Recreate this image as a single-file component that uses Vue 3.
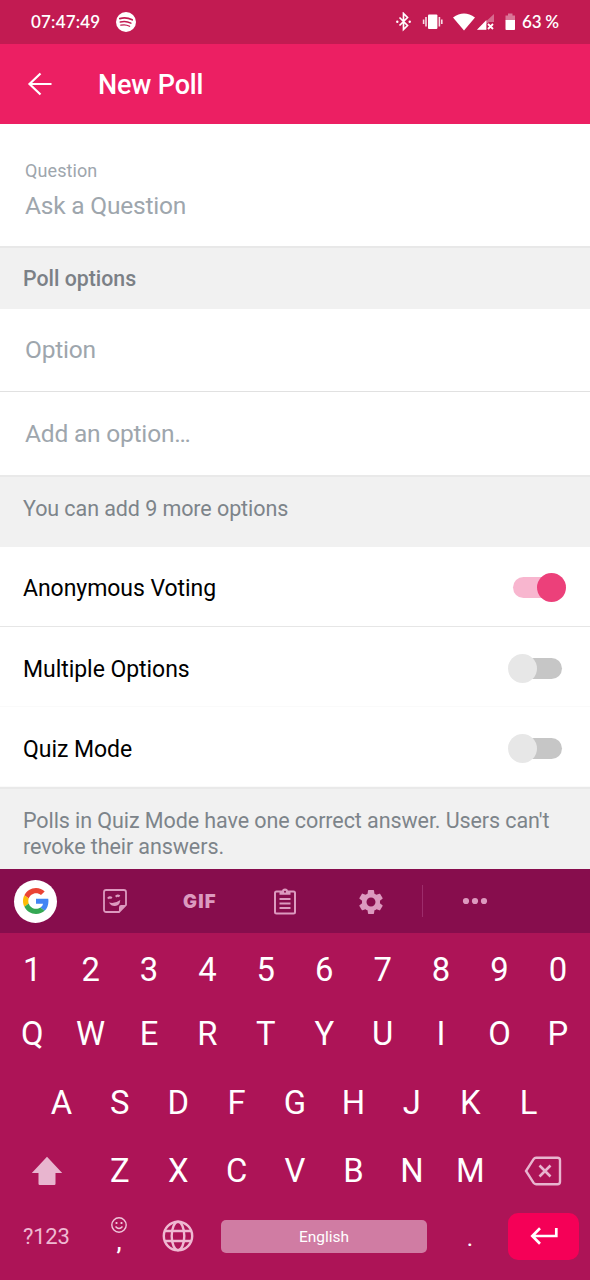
<script setup>
const digits = [...'1234567890']
const rowOne = [...'QWERTYUIOP']
const rowTwo = [...'ASDFGHJKL']
const rowThree = [...'ZXCVBNM']
const settings = [
  { label: 'Anonymous Voting', on: true },
  { label: 'Multiple Options', on: false },
  { label: 'Quiz Mode', on: false },
]
</script>

<template>
  <div class="screen">
    <div class="status">
      <span class="clock">07:47:49</span>
      <svg class="spotify" width="20" height="20" viewBox="0 0 20 20">
        <circle cx="10" cy="10" r="10" fill="#fff" />
        <g fill="none" stroke="#c21b52" stroke-linecap="round">
          <path d="M3.8 6.6q6.400-1.700 12.400 1.200" stroke-width="1.700" />
          <path d="M4.300 10q5.500-1.500 10.600 1.100" stroke-width="1.500" />
          <path d="M4.800 13.200q4.700-1.200 8.800 1" stroke-width="1.300" />
        </g>
      </svg>
      <span class="grow"></span>
      <svg class="tray" width="124" height="20" viewBox="0 0 124 20">
        <g fill="none" stroke="#fff" stroke-width="1.700">
          <path d="M3.500 5.500l8 8-4 4V1.500l4 4-8 8" />
        </g>
        <circle cx="1.300" cy="9.700" r="1.200" fill="#fff" />
        <circle cx="13.700" cy="9.700" r="1.200" fill="#fff" />
        <rect x="32" y="2.500" width="9.400" height="14.500" rx="1" fill="#fff" />
        <path d="M30 5v9.500M43.400 5v9.500M27.600 7.500v4.500M45.800 7.500v4.500" stroke="#fff" stroke-width="1.600" opacity=".85" />
        <path d="M57 5.600Q68-2.500 79 5.600L68 18.500z" fill="#fff" />
        <path d="M98 2v8h-4.800l-3.200 2v5.700h-9z" fill="#fff" opacity=".35" />
        <path d="M81 17.700l9.400-9.700v9.700z" fill="#fff" />
        <path d="M92 12l5 5M97 12l-5 5" stroke="#fff" stroke-width="1.800" />
        <path d="M112 1.500h4.500v2h2.500v4.800h-9.500V3.500h2.500z" fill="#fff" opacity=".4" />
        <path d="M109.500 8h9.500v9.200q0 .8-.8.800h-7.900q-.8 0-.8-.8z" fill="#fff" />
      </svg>
      <span class="battery">63 %</span>
    </div>

    <header class="appbar">
      <svg width="26" height="24" viewBox="0 0 26 24" fill="none" stroke="#fff" stroke-width="2.200">
        <path d="M24.500 12H2.500M13.500 1.500L2.500 12l11 10.500" />
      </svg>
      <h1>New Poll</h1>
    </header>

    <section class="question">
      <label>Question</label>
      <div class="placeholder">Ask a Question</div>
    </section>
    <div class="section-title">Poll options</div>
    <div class="field first">Option</div>
    <div class="field">Add an option…</div>
    <div class="note remaining">You can add 9 more options</div>

    <div v-for="s in settings" :key="s.label" class="setting" :class="{ active: s.on }">
      <span>{{ s.label }}</span>
      <i class="toggle" :class="{ on: s.on }"></i>
    </div>
    <div class="note hint">Polls in Quiz Mode have one correct answer. Users can't<br />revoke their answers.</div>

    <div class="keyboard">
      <div class="tools">
        <span class="google">
          <svg width="26" height="26" viewBox="0 0 48 48">
            <path fill="#EA4335" d="M24 9.500c3.540 0 6.710 1.220 9.210 3.600l6.850-6.850C35.900 2.380 30.470 0 24 0 14.620 0 6.510 5.380 2.560 13.220l7.980 6.190C12.430 13.720 17.740 9.500 24 9.500z" />
            <path fill="#4285F4" d="M46.980 24.550c0-1.570-.15-3.090-.38-4.550H24v9.020h12.940c-.58 2.960-2.260 5.480-4.780 7.180l7.730 6c4.510-4.180 7.090-10.360 7.090-17.650z" />
            <path fill="#FBBC05" d="M10.530 28.590c-.48-1.450-.76-2.990-.76-4.590s.27-3.140.76-4.590l-7.980-6.190C.92 16.460 0 20.120 0 24c0 3.880.92 7.540 2.560 10.780l7.970-6.190z" />
            <path fill="#34A853" d="M24 48c6.480 0 11.930-2.130 15.890-5.810l-7.730-6c-2.150 1.450-4.920 2.300-8.160 2.300-6.260 0-11.570-4.220-13.470-9.910l-7.980 6.190C6.510 42.620 14.620 48 24 48z" />
          </svg>
        </span>
        <span class="tool">
          <svg width="24" height="24" viewBox="0 0 24 24" fill="none" stroke="currentColor" stroke-width="1.800">
            <path d="M3.200 1h17.600Q23 1 23 3.200V16l-7 7H3.200Q1 23 1 20.800V3.200Q1 1 3.200 1z" />
            <path d="M16 23v-4.800q0-2.200 2.200-2.200H23z" fill="currentColor" stroke="none" />
            <path d="M5 9.700q1.600-2.400 3.800-.6M12.800 7.800q1.800-2.200 3.800-.4" stroke-width="2.200" />
            <path d="M6 13.500q6 1.500 11.300-2.500-.5 5.800-5.300 6-4 .2-6-3.500z" fill="currentColor" stroke="none" />
          </svg>
        </span>
        <span class="tool gif">GIF</span>
        <span class="tool">
          <svg width="22" height="27" viewBox="0 0 22 27" fill="none" stroke="currentColor" stroke-width="2">
            <rect x="1" y="3.500" width="20" height="22" rx="1.500" />
            <path d="M5.500 11h11M5.500 15.500h11M5.500 20h11" stroke-width="1.800" />
            <path d="M5.500 3.500H8a3 3 0 0 1 6 0h2.500v3.300h-11z" fill="currentColor" stroke="none" />
            <circle cx="11" cy="3.700" r="1" fill="#870d4d" stroke="none" />
          </svg>
        </span>
        <span class="tool gear">
          <svg width="30" height="30" viewBox="0 0 24 24" fill="currentColor">
            <path d="M19.140 12.940c.04-.3.060-.61.060-.94s-.02-.64-.07-.94l2.030-1.580c.18-.14.230-.41.120-.61l-1.920-3.320c-.12-.22-.37-.29-.59-.22l-2.390.96c-.5-.38-1.030-.7-1.620-.94L14.400 2.810c-.04-.24-.24-.41-.48-.41h-3.840c-.24 0-.43.17-.47.41L9.250 5.350C8.660 5.590 8.120 5.920 7.630 6.290L5.240 5.330c-.22-.08-.47 0-.59.22L2.740 8.870c-.12.210-.08.470.12.610l2.030 1.580C4.840 11.360 4.800 11.690 4.800 12s.02.640.07.940l-2.030 1.580c-.18.140-.23.410-.12.610l1.920 3.320c.12.220.37.290.59.220l2.390-.96c.5.380 1.030.7 1.620.94l.36 2.540c.05.240.24.410.48.410h3.840c.24 0 .44-.17.470-.41l.36-2.540c.59-.24 1.130-.56 1.620-.94l2.390.96c.22.080.47 0 .59-.22l1.920-3.320c.12-.22.070-.47-.12-.61l-2.010-1.580zM12 15.600c-1.980 0-3.600-1.620-3.600-3.600s1.620-3.600 3.600-3.600 3.600 1.620 3.600 3.600-1.620 3.600-3.600 3.600z" />
          </svg>
        </span>
        <span class="rule"></span>
        <span class="more"><svg width="26" height="8" viewBox="0 0 26 8" fill="currentColor"><circle cx="4" cy="4" r="3.100" /><circle cx="13" cy="4" r="3.100" /><circle cx="22" cy="4" r="3.100" /></svg></span>
      </div>

      <div class="keys numbers"><span v-for="k in digits" :key="k">{{ k }}</span></div>
      <div class="keys"><span v-for="k in rowOne" :key="k">{{ k }}</span></div>
      <div class="keys inset"><span v-for="k in rowTwo" :key="k">{{ k }}</span></div>
      <div class="keys last">
        <span class="wide">
          <svg width="32" height="30" viewBox="0 0 32 30"><path d="M16 .8L31.200 17H24.500v10.800q0 1.200-1.200 1.200H8.700q-1.200 0-1.200-1.200V17H.8z" fill="#e8b5cf" /></svg>
        </span>
        <span v-for="k in rowThree" :key="k">{{ k }}</span>
        <span class="wide">
          <svg width="38" height="30" viewBox="0 0 38 30" fill="none" stroke="#e8b5cf" stroke-width="2.400">
            <path d="M12 1.800h21.500q2.500 0 2.500 2.500v21.400q0 2.500-2.500 2.500H12q-1.500 0-2.400-1.300L2 15l7.600-11.900Q10.500 1.800 12 1.800z" />
            <path d="M15.500 9.500l11 11M26.500 9.500l-11 11" stroke-width="2.600" />
          </svg>
        </span>
      </div>
      <div class="bottom">
        <span class="symbols">?123</span>
        <span class="comma">
          <svg width="16" height="16" viewBox="0 0 16 16" fill="none" stroke="#efc5da" stroke-width="1.400">
            <circle cx="8" cy="8" r="7.200" />
            <path d="M4.500 9.500q3.500 4 7 0" />
            <path d="M5.500 5v2M10.500 5v2" stroke-width="1.800" />
          </svg>
          <b>,</b>
        </span>
        <span class="globe">
          <svg width="32" height="32" viewBox="0 0 32 32" fill="none" stroke="#efb9d2" stroke-width="2.400">
            <circle cx="16" cy="16" r="14.200" />
            <ellipse cx="16" cy="16" rx="6.300" ry="14.200" />
            <path d="M3 11h26M3 21h26" />
          </svg>
        </span>
        <span class="space">English</span>
        <span class="period">.</span>
        <span class="enter">
          <svg width="28" height="18" viewBox="0 0 28 18" fill="none" stroke="#fff" stroke-width="2.700">
            <path d="M26.300 1v8H2.500M10 1.200L2.300 9l7.700 7.800" />
          </svg>
        </span>
      </div>
    </div>
  </div>
</template>

<style>
body { margin: 0; }
</style>

<style scoped>
.screen {
  width: 590px;
  height: 1280px;
  overflow: hidden;
  display: flex;
  flex-direction: column;
  background: #fff;
  font-family: Roboto, "Liberation Sans", sans-serif;
}
.screen > * { box-sizing: border-box; flex-shrink: 0; }
.grow { flex: 1; }
.status {
  height: 44px;
  padding: 0 31px;
  display: flex;
  align-items: center;
  background: #c21b52;
  color: #fff;
  font: 600 17px/44px Lato, sans-serif;
}
.clock { width: 70px; letter-spacing: .2px; white-space: nowrap; }
.spotify { margin-left: 15px; }
.tray { margin-right: 2px; }
.battery { width: 37px; white-space: nowrap; letter-spacing: -.2px; }
.appbar {
  height: 80px;
  padding-left: 27px;
  display: flex;
  align-items: center;
  gap: 45px;
  background: #ec1f63;
  color: #fff;
}
h1 { margin: 2px 0 0; font-size: 27px; letter-spacing: -.15px; font-weight: 500; line-height: 32px; }
.question { height: 122px; padding: 36px 25px 0; color: #9ea6ad; }
.question label { display: block; font-size: 18px; line-height: 22px; letter-spacing: .1px; }
.placeholder { margin-top: 9px; font-size: 24.500px; line-height: 29px; letter-spacing: -.2px; }
.section-title {
  height: 63px;
  padding: 1px 23px 0;
  background: #f1f1f1;
  border-top: 2px solid #e8e8e8;
  color: #7b8086;
  font-size: 21.300px;
  font-weight: 500;
  line-height: 60px;
}
.field { height: 83px; padding: 0 25px; line-height: 83px; font-size: 24.500px; letter-spacing: -.2px; color: #9ea6ad; }
.field.first { line-height: 81px; border-bottom: 1px solid #e1e1e1; }
.note { padding: 0 23px; background: #f1f1f1; border-top: 2px solid #e9e9e9; color: #7d848a; font-size: 21.500px; letter-spacing: -.08px; }
.remaining { height: 72px; line-height: 63px; }
.hint { height: 82px; padding-top: 19px; line-height: 26px; white-space: nowrap; }
.setting {
  height: 80px;
  padding: 0 24px 0 23px;
  display: flex;
  align-items: center;
  justify-content: space-between;
  border-bottom: 1px solid #e6e6e6;
  color: #000;
  font-size: 23px;
  letter-spacing: -.05px;
}
.setting span { margin-top: 5px; }
.setting.active span { margin-top: 3px; }
.setting:nth-last-child(-n+4) { border-bottom-color: #fafafa; }
.toggle { position: relative; width: 53px; height: 29px; margin-right: 5px; margin-top: 3px; }
.toggle::before {
  content: "";
  position: absolute;
  left: 5px;
  top: 4px;
  width: 49px;
  height: 21px;
  border-radius: 11px;
  background: #c6c6c6;
}
.toggle::after {
  content: "";
  position: absolute;
  left: 0;
  top: 0;
  width: 29px;
  height: 29px;
  border-radius: 50%;
  background: #e7e7e7;
}
.toggle.on { margin-right: 0; margin-top: 2px; }
.toggle.on::before { left: 0; background: #f8b6cf; }
.toggle.on::after { left: 24px; background: #ec407a; }

.keyboard { height: 411px; background: #ad1457; color: #fff; display: flex; flex-direction: column; }
.tools { height: 64px; display: flex; align-items: center; background: #870d4d; color: #dc9abf; }
.google {
  width: 43px;
  height: 43px;
  margin: 0 15px 0 14px;
  border-radius: 50%;
  background: #fff;
  display: flex;
  align-items: center;
  justify-content: center;
}
.tool { width: 85.300px; display: flex; justify-content: center; }
.gif { font: 900 18.500px/24px Inter, sans-serif; letter-spacing: 1.300px; }
.gear { padding-top: 2px; }
.rule { width: 1px; height: 32px; margin-left: 9px; background: #9d2c6b; }
.more { margin-left: 39px; display: flex; }
.keys { height: 68px; padding: 0 3px; display: flex; align-items: center; font-size: 32.800px; line-height: 68px; }
.keys span { flex: 1 1 0; display: flex; justify-content: center; align-items: center; }
.keys.numbers { height: 67px; padding-top: 6px; box-sizing: border-box; }
.keys.inset { padding: 2px 32.200px 0; height: 68px; box-sizing: border-box; }
.keys.last { padding-top: 1px; }
.keys .wide { flex: 1.500 1 0; }
.bottom { height: 76px; display: flex; align-items: center; margin-top: -7px; }
.symbols { width: 70px; padding-left: 23px; font-size: 22px; color: #efb9d2; letter-spacing: -.2px; }
.comma { width: 52px; display: flex; flex-direction: column; align-items: center; font-size: 23px; line-height: 20px; margin-top: -2px; }
.comma b { font-weight: 500; }
.globe { display: flex; margin-left: 17px; }
.space {
  width: 206px;
  height: 33px;
  margin-left: 27px;
  border-radius: 5px;
  background: #d07ca3;
  font-size: 15.500px;
  line-height: 34px;
  text-align: center;
}
.period { width: 81px; text-align: center; font-size: 24px; padding: 4px 0 0 5px; box-sizing: border-box; }
.enter {
  width: 71px;
  height: 47px;
  border-radius: 10px;
  background: #f50057;
  display: flex;
  align-items: center;
  justify-content: center;
}
</style>
